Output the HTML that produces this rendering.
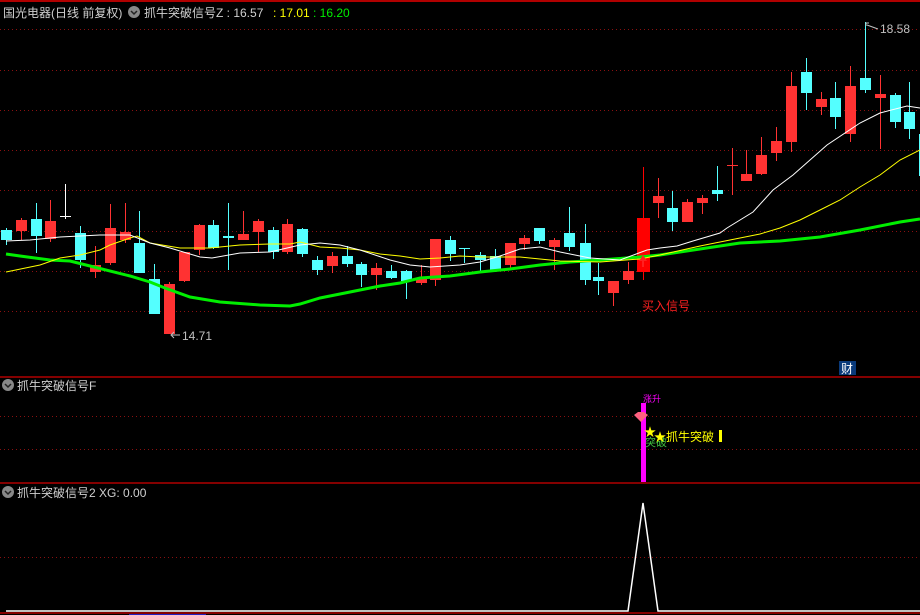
<!DOCTYPE html>
<html><head><meta charset="utf-8"><style>
html,body{margin:0;padding:0;background:#000;width:920px;height:615px;overflow:hidden}
svg{display:block}
text{font-family:"Liberation Sans","Noto Sans CJK SC",sans-serif;font-size:12px}
</style></head><body>
<svg id="s" width="920" height="615" xmlns="http://www.w3.org/2000/svg">
<rect width="920" height="615" fill="#000"/>
<line x1="0" y1="1" x2="920" y2="1" stroke="#b00000" stroke-width="2"/>
<g stroke="#8a1010" stroke-width="1" stroke-dasharray="1,3">
<line x1="0" y1="29.5" x2="920" y2="29.5"/><line x1="0" y1="70.5" x2="920" y2="70.5"/>
<line x1="0" y1="110.5" x2="920" y2="110.5"/><line x1="0" y1="150.5" x2="920" y2="150.5"/>
<line x1="0" y1="190.5" x2="920" y2="190.5"/><line x1="0" y1="231.5" x2="920" y2="231.5"/>
<line x1="0" y1="271.5" x2="920" y2="271.5"/><line x1="0" y1="311.5" x2="920" y2="311.5"/>
<line x1="0" y1="416.5" x2="920" y2="416.5"/><line x1="0" y1="449.5" x2="920" y2="449.5"/>
<line x1="0" y1="557.5" x2="920" y2="557.5"/>
</g>
<line x1="0" y1="377" x2="920" y2="377" stroke="#b00000" stroke-width="1.5"/>
<line x1="0" y1="483" x2="920" y2="483" stroke="#b00000" stroke-width="1.5"/>
<line x1="0" y1="613" x2="920" y2="613" stroke="#b00000" stroke-width="1.5"/>
<line x1="129" y1="614.5" x2="206" y2="614.5" stroke="#2020c0" stroke-width="1"/>
<g id="c"></g>
<polyline fill="none" stroke="#00ee00" stroke-width="3" points="6,254 20,256 50,260 70,261 90,266 130,276 150,282 165,288 190,297 220,302 260,305 290,306 300,304 320,298 350,292 380,286 400,283 420,278 450,276 480,272 510,269 540,265 570,262 600,260 640,257 660,255 700,249 740,243 780,241 820,237 860,230 900,222 920,219"/>
<polyline fill="none" stroke="#ffff00" stroke-width="1" points="6,272 40,265 60,258 80,255 100,250 110,245 130,238 137,236 150,243 180,248 210,248 240,245 270,244 290,244 300,242 320,247 340,248 360,250 380,254 400,256 420,259 440,258 460,256 480,257 500,257 520,257 540,259 560,261 600,262 640,259 660,255 700,246 730,240 760,234 780,228 800,220 820,210 840,200 860,187 880,175 900,160 920,150"/>
<polyline fill="none" stroke="#ffffff" stroke-width="1" points="6,241 30,240 60,237 100,235 130,235 150,243 170,248 200,257 212,258 240,253 270,252 300,245 320,243 340,245 360,250 390,260 410,265 430,267 460,265 480,262 500,256 520,249 540,247 560,252 590,258 620,260 647,250 660,248 677,246 693,241 720,233 727,228 753,212 773,190 793,175 827,145 860,123 880,113 907,106 920,108"/>
<text x="3" y="17" fill="#d0d0d0">国光电器(日线 前复权)</text>
<circle cx="134" cy="12" r="6" fill="#888"/><path d="M131 11l3 3 3-3" stroke="#222" stroke-width="1.5" fill="none"/>
<text x="144" y="17" fill="#d0d0d0">抓牛突破信号Z : 16.57</text>
<text x="273" y="17" fill="#ffff00">: 17.01</text>
<text x="313" y="17" fill="#00ee00">: 16.20</text>
<text x="880" y="33" fill="#c0c0c0">18.58</text>
<path d="M866 26v-3h3M867 25l11 4" stroke="#c0c0c0" fill="none"/>
<text x="182" y="340" fill="#c0c0c0">14.71</text>
<path d="M180 335h-8M174 332l-3 3 3 3" stroke="#c0c0c0" fill="none"/>
<path d="M643 255l-4 6h3v6h2v-6h3z" fill="#ff2020"/>
<text x="642" y="310" fill="#ff2020">买入信号</text>
<rect x="839" y="361" width="17" height="14" fill="#0a3a7a"/>
<text x="841" y="373" fill="#ffffff">财</text>
<circle cx="8" cy="385" r="6" fill="#888"/><path d="M5 384l3 3 3-3" stroke="#222" stroke-width="1.5" fill="none"/>
<text x="17" y="390" fill="#d0d0d0">抓牛突破信号F</text>
<rect x="641" y="403" width="5" height="79" fill="#ff00ff"/>
<text x="643" y="402" fill="#ff00ff" style="font-size:9px">涨升</text>
<path d="M634 415l4-3h6l4 3-7 7z" fill="#ff6080"/>
<text x="644" y="436" fill="#ffff00">★</text>
<text x="645" y="446" fill="#40c040" style="font-size:11px">突破</text>
<text x="654" y="441" fill="#ffff00">★抓牛突破</text>
<rect x="719" y="430" width="3" height="12" fill="#ffff00"/>
<circle cx="8" cy="492" r="6" fill="#888"/><path d="M5 491l3 3 3-3" stroke="#222" stroke-width="1.5" fill="none"/>
<text x="17" y="497" fill="#d0d0d0">抓牛突破信号2 XG: 0.00</text>
<polyline fill="none" stroke="#fff" stroke-width="1.5" points="6,611 628,611 643,503 658,611 920,611"/>
</svg>
<script>
var d=[[1,"c",230,240,228,245],[16,"r",220,231,218,240],[31,"c",219,236,203,253],[45,"r",221,239,200,242],[60,"w",216,217,184,219],[75,"c",233,260,226,268],[90,"r",265,272,246,278],[105,"r",228,263,204,265],[120,"r",232,240,203,243],[134,"c",243,273,211,273],[149,"c",279,314,264,314],[164,"r",284,334,282,334],[179,"r",252,281,252,282],[194,"r",225,250,224,255],[208,"c",225,248,220,249],[223,"c",236,238,203,270],[238,"r",234,240,211,240],[253,"r",221,232,219,252],[268,"c",230,252,227,259],[282,"r",224,252,219,254],[297,"c",229,254,228,257],[312,"c",260,270,256,275],[327,"r",256,266,252,273],[342,"c",256,264,246,267],[356,"c",264,275,262,287],[371,"r",268,275,263,290],[386,"c",271,278,265,279],[401,"c",271,281,270,299],[416,"r",278,283,265,285],[430,"r",239,280,239,286],[445,"c",240,254,236,261],[459,"c",248,249,248,263],[475,"c",255,260,252,272],[490,"c",256,271,249,272],[505,"r",243,265,243,268],[519,"r",238,244,235,250],[534,"c",228,241,228,244],[549,"r",240,247,238,270],[564,"c",233,247,207,251],[580,"c",243,280,224,285],[593,"c",277,281,263,295],[608,"r",281,293,281,306],[623,"r",271,280,262,284],[637,"R",218,272,167,280],[653,"r",196,203,178,218],[667,"c",208,222,191,231],[682,"r",202,222,199,222],[697,"r",198,203,195,214],[712,"c",190,194,166,201],[727,"r",165,166,148,195],[741,"r",174,181,150,181],[756,"r",155,174,137,175],[771,"r",141,153,127,161],[786,"r",86,142,72,152],[801,"c",72,93,58,110],[816,"r",99,107,92,115],[830,"c",98,117,82,129],[845,"r",86,134,66,142],[860,"c",78,90,22,93],[875,"r",94,98,75,149],[890,"c",95,122,93,128],[904,"c",112,129,82,139],[919,"c",134,176,134,176]];
var col={c:"#54ffff",r:"#ff3232",R:"#ff0000",w:"#ffffff"},h="";
d.forEach(function(a){var x=a[0],w=(a[1]=="R"?13:11),f=col[a[1]],cx=x+Math.floor(w/2)+0.5;
h+='<line x1="'+cx+'" y1="'+a[4]+'" x2="'+cx+'" y2="'+a[5]+'" stroke="'+f+'"/>';
h+='<rect x="'+x+'" y="'+a[2]+'" width="'+w+'" height="'+Math.max(1,a[3]-a[2])+'" fill="'+f+'"/>';});
document.getElementById("c").innerHTML=h;
</script>
</body></html>
